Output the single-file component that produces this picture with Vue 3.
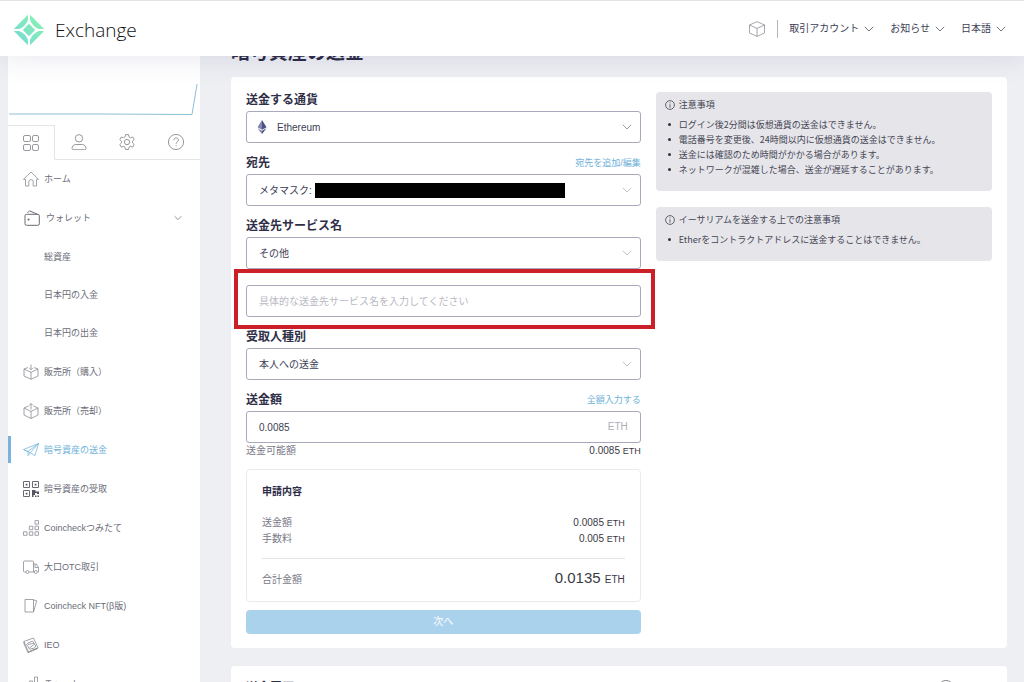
<script setup>
import { ref } from 'vue'

const menus = ['取引アカウント', 'お知らせ', '日本語']

const tabs = [
  {
    label: 'メニュー',
    d: 'M2 .5h4a1.5 1.5 0 0 1 1.5 1.5v3A1.5 1.5 0 0 1 6 6.500H2A1.500 1.500 0 0 1 .5 5V2A1.500 1.500 0 0 1 2 .5zM11 .5h3a1.500 1.500 0 0 1 1.500 1.500v3a1.500 1.500 0 0 1-1.500 1.500H11A1.500 1.500 0 0 1 9.500 5V2A1.500 1.500 0 0 1 11 .5zM2 9.500h4A1.500 1.500 0 0 1 7.500 11v3A1.500 1.500 0 0 1 6 15.500H2A1.500 1.500 0 0 1 .5 14v-3A1.500 1.500 0 0 1 2 9.500zM11 9.500h3A1.500 1.500 0 0 1 15.500 11v3a1.500 1.500 0 0 1-1.500 1.500H11A1.500 1.500 0 0 1 9.500 14v-3A1.500 1.500 0 0 1 11 9.500z'
  },
  {
    label: 'アカウント',
    d: 'M8 .6a3.700 3.700 0 1 1 0 7.400a3.700 3.700 0 0 1 0-7.400zM4.500 10.500h7c2 0 3.500 2.200 3.500 4 0 .8-.6 1.200-1.200 1.200H2.200C1.600 15.700 1 15.300 1 14.500c0-1.800 1.500-4 3.500-4z'
  },
  {
    label: '設定',
    d: 'M6.500.6h3l.5 2.300 1.500.9 2.200-.8 1.500 2.600-1.700 1.600v1.700l1.700 1.600-1.500 2.600-2.200-.8-1.500.9-.5 2.300h-3L6 13.200l-1.500-.9-2.200.8L.8 10.500l1.700-1.600V7.200L.8 5.600 2.300 3l2.200.8L6 2.900zM8 5.400a2.650 2.650 0 1 1 0 5.300a2.650 2.650 0 0 1 0-5.300z'
  },
  {
    label: 'ヘルプ',
    d: 'M8 .4a7.600 7.600 0 1 1 0 15.200a7.600 7.600 0 0 1 0-15.200zM5.800 6.200c0-3 4.600-3 4.600-.2 0 1.800-2.300 1.800-2.300 3.800M8.100 11.300v1'
  }
]

const items = [
  { text: 'ホーム', d: 'M.5 8.300 8 1l7.500 7.300h-2V15h-3.300v-4.200a2.200 2.200 0 0 0-4.400 0V15H2.500V8.300z' },
  {
    text: 'ウォレット',
    wallet: true,
    d: 'M2.500 4.300h11.300a1.500 1.500 0 0 1 1.500 1.500v8a1.500 1.500 0 0 1-1.500 1.500H2.500A1.500 1.500 0 0 1 1 13.800v-8a1.500 1.500 0 0 1 1.500-1.500zM3.500 2.800 5.500.8l8 3.500',
    fill: 'M3.700 8.700h1.700v1.700H3.700z',
    children: ['総資産', '日本円の入金', '日本円の出金']
  },
  { text: '販売所（購入）', d: 'M5 3.500 1 5v7l7 3.300 7-3.300V5l-4-1.500M1 5l7 3.300L15 5M8 8.300v7M8 .5v5M6.200 4 8 5.800 9.800 4' },
  { text: '販売所（売却）', d: 'M5.500 3 1 5v7l7 3.500 7-3.500V5l-4.500-2M1 5l7 3.500L15 5M8 8.500v7M8 6.500v-6M6.200 2.300 8 .5l1.800 1.800' },
  { text: '暗号資産の送金', active: true, d: 'M.5 7.500 15.500 1.500 12 13.500 7.200 10.800zM.5 7.500 5 9.500l10.500-8-8.300 9.300M5 9.500v4.200l2.200-2.900' },
  {
    text: '暗号資産の受取',
    dark: true,
    d: 'M.5.5h6v6h-6zM9.500.5h6v6h-6zM.5 9.500h6v6h-6z',
    fill: 'M2.700 2.700h1.700v1.700H2.700zM11.700 2.700h1.700v1.700h-1.700zM2.700 11.700h1.700v1.700H2.700zM9 9h3.500v1.500H16V13h-2v-1h-2v2h-1.500v2H9zM12 14.500h1.500V16H12zM14.500 14.500H16V16h-1.500z'
  },
  {
    text: 'Coincheckつみたて',
    d: 'M.5 11.800h3.500v3.500H.5zM6.300 11.800h3.500v3.500H6.300zM12 11.800h3.500v3.500H12zM6.300 6.200h3.500v3.500H6.300zM12 6.200h3.500v3.500H12zM12 .6h3.500v3.500H12z'
  },
  {
    text: '大口OTC取引',
    d: 'M2.800 13H1.500a1 1 0 0 1-1-1V3a1 1 0 0 1 1-1h8a1 1 0 0 1 1 1v10M6.200 13h5M10.500 5h2.800l2.200 3.500V13h-1M12 5.200v3.300h3.500M4.500 11.500a1.500 1.500 0 1 1 0 3a1.500 1.500 0 0 1 0-3zM12.800 11.500a1.500 1.500 0 1 1 0 3a1.500 1.500 0 0 1 0-3z'
  },
  { text: 'Coincheck NFT(β版)', d: 'M2 1.500h8.500V14H2zM10.500 2l3.200.7L10.500 14' },
  { text: 'IEO', d: 'M.8 4.500 10.500 1l4.500 9.800L5.500 15zM.8 4.500l.8 2.800M15 10.800 5.500 15M.8 6.300l4.200 9.400 9.700-4.200M4.700 6.200l4.800-2.200 3.300 5-1.300 2-4.800 1.200-3-4.600zM5 7.500l6-1.300M6.500 10.800l5-3.500' },
  { text: 'チャート', d: 'M1.500 10h3v5.500h-3zM6.500 5h3v10.500h-3zM11.500 1h3v14.500h-3z' }
]

const notices = [
  {
    title: '注意事項',
    lines: [
      'ログイン後2分間は仮想通貨の送金はできません。',
      '電話番号を変更後、24時間以内に仮想通貨の送金はできません。',
      '送金には確認のため時間がかかる場合があります。',
      'ネットワークが混雑した場合、送金が遅延することがあります。'
    ]
  },
  {
    title: 'イーサリアムを送金する上での注意事項',
    lines: ['Etherをコントラクトアドレスに送金することはできません。']
  }
]

const amount = ref('0.0085')
const service = ref('')
</script>

<template>
  <div class="app">
    <header class="topbar">
      <a class="brand" href="#">
        <svg class="logo" viewBox="0 0 32 32" aria-hidden="true">
          <defs>
            <linearGradient id="mint" gradientUnits="userSpaceOnUse" x1="4" y1="26" x2="26" y2="6">
              <stop offset="0" stop-color="#76dbd3" />
              <stop offset="1" stop-color="#86f0b4" />
            </linearGradient>
          </defs>
          <g fill="url(#mint)">
            <path d="M15 .8V6Q12.500 12.500 6 15H.8z" />
            <path d="M17 .8V6Q19.500 12.500 26 15h5.200z" />
            <path d="M15 31.200V26Q12.500 19.500 6 17H.8z" />
            <path d="M17 31.200V26Q19.500 19.500 26 17h5.200z" />
            <path d="M16 9.800 22.200 16 16 22.200 9.800 16z" />
          </g>
        </svg>
        <span>Exchange</span>
      </a>
      <nav class="menus">
        <svg class="cube" viewBox="0 0 16 16" aria-hidden="true">
          <path d="M8 .6 15.500 4v8L8 15.400.5 12V4zM.5 4 8 7.400 15.500 4M8 7.400v8" />
        </svg>
        <span class="divider"></span>
        <button v-for="m in menus" :key="m" type="button" class="menu">
          {{ m }}
          <svg class="chev" viewBox="0 0 10 6" aria-hidden="true"><path d="M.8.8 5 5 9.200.8" /></svg>
        </button>
      </nav>
    </header>

    <div class="body">
      <aside class="sidebar">
        <svg class="chart" viewBox="0 0 192 69" preserveAspectRatio="none" aria-hidden="true">
          <path d="M1 58h92l91 .5L189 28" />
        </svg>
        <div class="tabs">
          <button v-for="(t, i) in tabs" :key="t.label" type="button" class="tab" :class="{ on: i === 0 }" :aria-label="t.label">
            <svg viewBox="0 0 16 16" aria-hidden="true"><path :d="t.d" /></svg>
          </button>
        </div>
        <ul class="nav">
          <li v-for="it in items" :key="it.text">
            <a href="#" class="item" :class="{ active: it.active, dark: it.dark, wallet: it.wallet }">
              <svg class="icon" viewBox="0 0 16 16" aria-hidden="true">
                <path :d="it.d" />
                <path v-if="it.fill" class="solid" :d="it.fill" />
              </svg>
              <span>{{ it.text }}</span>
              <svg v-if="it.children" class="chev small" viewBox="0 0 10 6" aria-hidden="true"><path d="M.8.8 5 5 9.200.8" /></svg>
            </a>
            <ul v-if="it.children" class="sub">
              <li v-for="c in it.children" :key="c"><a href="#">{{ c }}</a></li>
            </ul>
          </li>
        </ul>
      </aside>

      <main class="main">
        <h1>暗号資産の送金</h1>
        <section class="card">
          <form class="form" @submit.prevent>
            <div class="field">
              <div class="head"><label for="coin">送金する通貨</label></div>
              <div class="control">
                <svg class="eth" viewBox="0 0 10 14" aria-hidden="true">
                  <path fill="#8186ad" d="M5 0v9.800L.5 7.200z" />
                  <path fill="#4c5082" d="M5 0v9.800l4.500-2.600z" />
                  <path fill="#8186ad" d="M.5 8.200 5 10.800V14z" />
                  <path fill="#4c5082" d="M9.500 8.200 5 10.800V14z" />
                </svg>
                <select id="coin" class="with-icon"><option>Ethereum</option></select>
                <svg class="chev drop strong" viewBox="0 0 10 6" aria-hidden="true"><path d="M.8.8 5 5 9.200.8" /></svg>
              </div>
            </div>

            <div class="field">
              <div class="head"><label for="dest">宛先</label><a href="#">宛先を追加/編集</a></div>
              <div class="control">
                <select id="dest"><option>メタマスク:</option></select>
                <span class="redacted"></span>
                <svg class="chev drop" viewBox="0 0 10 6" aria-hidden="true"><path d="M.8.8 5 5 9.200.8" /></svg>
              </div>
            </div>

            <div class="field">
              <div class="head"><label for="svc">送金先サービス名</label></div>
              <div class="control">
                <select id="svc"><option>その他</option></select>
                <svg class="chev drop" viewBox="0 0 10 6" aria-hidden="true"><path d="M.8.8 5 5 9.200.8" /></svg>
              </div>
              <div class="control extra">
                <input v-model="service" type="text" aria-label="送金先サービス名の詳細" placeholder="具体的な送金先サービス名を入力してください" />
                <span class="mark"></span>
              </div>
            </div>

            <div class="field">
              <div class="head"><label for="kind">受取人種別</label></div>
              <div class="control">
                <select id="kind"><option>本人への送金</option></select>
                <svg class="chev drop" viewBox="0 0 10 6" aria-hidden="true"><path d="M.8.8 5 5 9.200.8" /></svg>
              </div>
            </div>

            <div class="field last">
              <div class="head"><label for="amount">送金額</label><a href="#">全額入力する</a></div>
              <div class="control">
                <input id="amount" v-model="amount" type="text" />
                <span class="unit">ETH</span>
              </div>
              <div class="row available"><span>送金可能額</span><b>0.0085 <small>ETH</small></b></div>
            </div>

            <div class="summary">
              <h2>申請内容</h2>
              <div class="row"><span>送金額</span><b>0.0085 <small>ETH</small></b></div>
              <div class="row"><span>手数料</span><b>0.005 <small>ETH</small></b></div>
              <div class="row total"><span>合計金額</span><b>0.0135 <small>ETH</small></b></div>
            </div>
            <button type="submit" class="next">次へ</button>
          </form>

          <div class="notices">
            <section v-for="n in notices" :key="n.title" class="notice">
              <h3>
                <svg viewBox="0 0 10 10" aria-hidden="true"><circle cx="5" cy="5" r="4.400" /><path d="M5 4.300v3.400M5 2.300v1" /></svg>
                {{ n.title }}
              </h3>
              <ul>
                <li v-for="l in n.lines" :key="l">{{ l }}</li>
              </ul>
            </section>
          </div>
        </section>

        <section class="card history">
          <h2>送金履歴</h2>
          <button type="button" class="help" aria-label="ヘルプ">
            <svg viewBox="0 0 16 16" aria-hidden="true"><path :d="tabs[3].d" /></svg>
          </button>
        </section>
      </main>
    </div>
  </div>
</template>

<style>
body {
  background: #edeff3;
}
</style>

<style scoped>
.app,
.app * {
  box-sizing: border-box;
}
.app {
  height: 100vh;
  overflow: hidden;
  display: flex;
  flex-direction: column;
  font-family: "Liberation Sans", "Noto Sans CJK JP", sans-serif;
  font-size: 10px;
  line-height: 16px;
  color: #3d3d55;
  background: #edeff3;
}
button,
input,
select {
  font: inherit;
  color: inherit;
  margin: 0;
}
button {
  border: 0;
  padding: 0;
  background: none;
}
a {
  color: inherit;
  text-decoration: none;
}
ul {
  list-style: none;
  margin: 0;
  padding: 0;
}
h1,
h2,
h3 {
  margin: 0;
}
svg {
  display: block;
  flex: none;
}

.topbar {
  position: relative;
  z-index: 2;
  flex: none;
  height: 56px;
  display: flex;
  align-items: center;
  justify-content: space-between;
  padding: 0 18px 0 13px;
  background: #fff;
  border-top: 1px solid #e3e3e6;
  box-shadow: 0 0 30px rgba(70, 60, 110, 0.14);
}
.brand {
  display: flex;
  align-items: center;
  gap: 10px;
  padding-top: 2px;
  font-family: "Open Sans", sans-serif;
  font-weight: 300;
  font-size: 19px;
  line-height: 28px;
  color: #111;
}
.logo {
  width: 32px;
  height: 32px;
}
.menus {
  display: flex;
  align-items: center;
  gap: 16px;
}
.cube {
  width: 16px;
  height: 16px;
  fill: none;
  stroke: #8f8f98;
  stroke-width: 0.8;
  margin-right: -4px;
}
.divider {
  width: 1px;
  height: 18px;
  background: #b4b4bb;
  margin-right: -5px;
}
.menu {
  display: flex;
  align-items: center;
  gap: 5px;
}
.chev {
  width: 10px;
  height: 6px;
  fill: none;
  stroke: #75757f;
  stroke-width: 1;
}

.body {
  flex: 1;
  min-height: 0;
  overflow: hidden;
  display: flex;
  align-items: stretch;
}
.sidebar {
  flex: none;
  width: 192px;
  margin-left: 8px;
  background: #fff;
}
.chart {
  width: 100%;
  height: 69px;
  fill: none;
  stroke: #8fbfd8;
  stroke-width: 1;
}
.tabs {
  display: flex;
}
.tab {
  flex: 1;
  height: 35px;
  display: flex;
  align-items: center;
  justify-content: center;
  border-bottom: 1px solid #e4e4e9;
}
.tab.on {
  flex: 0 0 47px;
  border-top: 1px solid #e4e4e9;
  border-right: 1px solid #e4e4e9;
  border-bottom-color: transparent;
}
.tab svg {
  width: 16px;
  height: 16px;
  fill: none;
  stroke: #8c8c93;
  stroke-width: 0.9;
}
.nav {
  margin-top: -1px;
  font-size: 9px;
  color: #6c6c78;
}
.item {
  height: 39px;
  display: flex;
  align-items: center;
  gap: 5px;
  padding: 0 18px 0 15px;
}
.icon {
  width: 16px;
  height: 16px;
  fill: none;
  stroke: #8c8c94;
  stroke-width: 0.8;
  stroke-linejoin: round;
}
.icon .solid {
  fill: #55555f;
  stroke: none;
}
.dark .icon,
.wallet .icon {
  stroke: #6a6a74;
  stroke-width: 1;
}
.wallet {
  padding-left: 16px;
  gap: 6px;
}
.small {
  width: 8px;
  margin-left: auto;
}
.active {
  position: relative;
  color: #6fb2da;
}
.active .icon {
  stroke: #7ab8dc;
}
.active::before {
  content: "";
  position: absolute;
  left: 0;
  top: 6px;
  bottom: 6px;
  width: 3px;
  background: #7ab4dc;
}
.sub {
  padding-top: 1px;
}
.sub a {
  display: flex;
  align-items: center;
  height: 38px;
  padding-left: 36px;
}

.main {
  flex: 1;
  min-width: 0;
  margin-top: -17px;
  padding: 0 17px 0 31px;
}
h1 {
  font-size: 19px;
  line-height: 28px;
  color: #2b2b45;
  margin-bottom: 10px;
}
.card {
  display: grid;
  grid-template-columns: 54fr 46fr;
  gap: 15px;
  padding: 10px 15px 14px;
  background: #fff;
  border-radius: 4px;
}
.field {
  margin-bottom: 7px;
}
.field.last {
  margin-bottom: 10px;
}
.head {
  height: 24px;
  display: flex;
  align-items: center;
  justify-content: space-between;
  padding-top: 1px;
}
.head label {
  font-size: 12px;
  font-weight: 700;
  color: #2f2f48;
}
.head a {
  font-size: 9px;
  color: #6fb2da;
}
.control {
  position: relative;
}
.control select,
.control input {
  display: block;
  width: 100%;
  height: 32px;
  padding: 0 12px;
  appearance: none;
  background: #fff;
  border: 1px solid #a9a9bb;
  border-radius: 3px;
  outline: 0;
}
.control select {
  padding-top: 1px;
}
.control select.with-icon {
  padding-left: 30px;
}
.control input::placeholder {
  color: #b9b9c4;
  opacity: 1;
}
.eth {
  position: absolute;
  left: 11px;
  top: 9px;
  width: 10px;
  height: 14px;
}
.drop {
  position: absolute;
  right: 9px;
  top: 13px;
  stroke: #c3c3cb;
}
.drop.strong {
  stroke: #9c9ca6;
}
.redacted {
  position: absolute;
  left: 69px;
  top: 9px;
  width: 250px;
  height: 15px;
  background: #000;
}
.extra {
  margin-top: 16px;
}
.mark {
  position: absolute;
  z-index: 1;
  top: -16px;
  right: -14px;
  bottom: -12px;
  left: -12px;
  border: 4px solid #cb2027;
  pointer-events: none;
}
.unit {
  position: absolute;
  right: 13px;
  top: 8px;
  color: #adadb5;
}
.row {
  display: flex;
  align-items: baseline;
  justify-content: space-between;
  height: 16px;
  color: #7a7a87;
}
.row b {
  font-weight: 400;
  color: #3a3a45;
}
.row small {
  font-size: 9px;
}
.summary {
  padding: 14px 15px 11px;
  border: 1px solid #ebebef;
  border-radius: 4px;
}
.summary h2 {
  font-size: 10px;
  line-height: 16px;
  color: #2b2b45;
  margin-bottom: 15px;
}
.row.total {
  height: 32px;
  margin-top: 11px;
  padding-top: 7px;
  border-top: 1px solid #e4e4e8;
  line-height: 24px;
}
.total b {
  font-size: 15px;
}
.total small {
  font-size: 10px;
}
.next {
  display: block;
  width: 100%;
  height: 24px;
  margin-top: 8px;
  border-radius: 4px;
  background: #abd2ed;
  color: #fff;
}

.notices {
  padding-top: 5px;
  display: flex;
  flex-direction: column;
  gap: 16px;
  font-family: "Noto Sans CJK JP", sans-serif;
  font-size: 9px;
}
.notice {
  padding: 5px 9px 14px;
  background: #e5e5ea;
  border-radius: 4px;
  color: #454554;
}
.notice h3 {
  display: flex;
  align-items: center;
  gap: 4px;
  font-size: 9px;
  font-weight: 400;
  line-height: 16px;
  margin-bottom: 4px;
}
.notice h3 svg {
  width: 10px;
  height: 10px;
  fill: none;
  stroke: #55555f;
  stroke-width: 0.9;
}
.notice li {
  display: flex;
  align-items: center;
  gap: 8px;
  line-height: 15px;
  padding-left: 3px;
}
.notice li::before {
  content: "";
  flex: none;
  width: 3px;
  height: 3px;
  border-radius: 50%;
  background: #333340;
}

.history {
  display: flex;
  justify-content: space-between;
  margin-top: 18px;
}
.history h2 {
  font-size: 12px;
  line-height: 24px;
  color: #2f2f48;
}
.help {
  height: 24px;
  margin-right: 38px;
}
.help svg {
  width: 16px;
  height: 16px;
  fill: none;
  stroke: #8c8c93;
}
</style>
